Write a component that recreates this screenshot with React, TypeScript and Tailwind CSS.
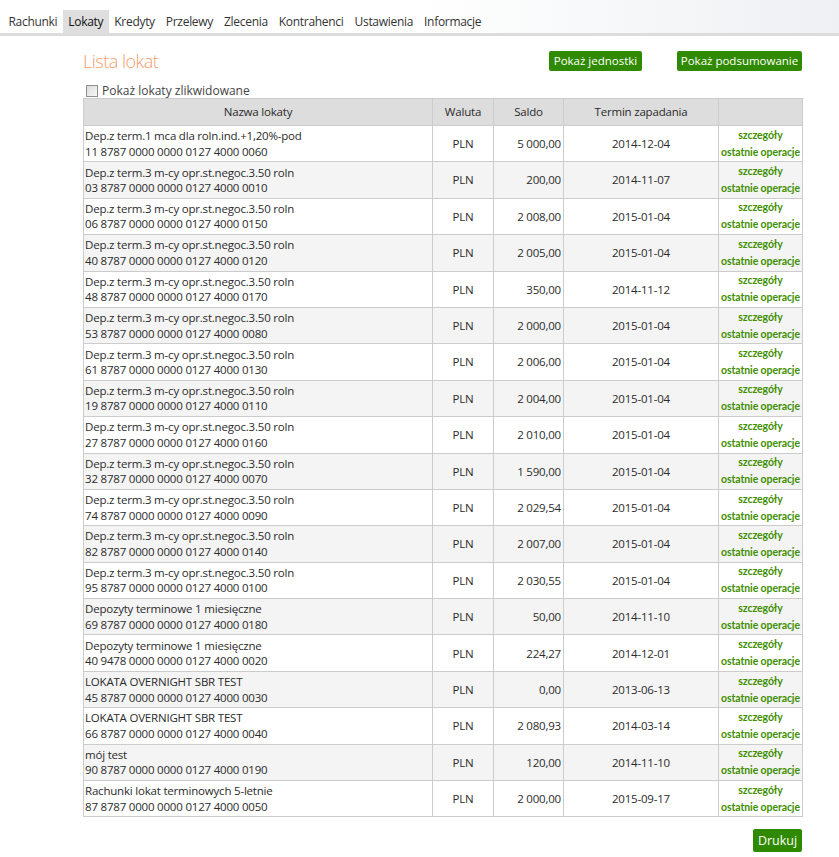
import React from "react";

const tabs = ["Rachunki", "Lokaty", "Kredyty", "Przelewy", "Zlecenia", "Kontrahenci", "Ustawienia", "Informacje"];

const NAME3 = "Dep.z term.3 m-cy opr.st.negoc.3.50 roln";

const rows = [
  { name: "Dep.z term.1 mca dla roln.ind.+1,20%-pod", acc: "11 8787 0000 0000 0127 4000 0060", saldo: "5 000,00", date: "2014-12-04" },
  { name: NAME3, acc: "03 8787 0000 0000 0127 4000 0010", saldo: "200,00", date: "2014-11-07" },
  { name: NAME3, acc: "06 8787 0000 0000 0127 4000 0150", saldo: "2 008,00", date: "2015-01-04" },
  { name: NAME3, acc: "40 8787 0000 0000 0127 4000 0120", saldo: "2 005,00", date: "2015-01-04" },
  { name: NAME3, acc: "48 8787 0000 0000 0127 4000 0170", saldo: "350,00", date: "2014-11-12" },
  { name: NAME3, acc: "53 8787 0000 0000 0127 4000 0080", saldo: "2 000,00", date: "2015-01-04" },
  { name: NAME3, acc: "61 8787 0000 0000 0127 4000 0130", saldo: "2 006,00", date: "2015-01-04" },
  { name: NAME3, acc: "19 8787 0000 0000 0127 4000 0110", saldo: "2 004,00", date: "2015-01-04" },
  { name: NAME3, acc: "27 8787 0000 0000 0127 4000 0160", saldo: "2 010,00", date: "2015-01-04" },
  { name: NAME3, acc: "32 8787 0000 0000 0127 4000 0070", saldo: "1 590,00", date: "2015-01-04" },
  { name: NAME3, acc: "74 8787 0000 0000 0127 4000 0090", saldo: "2 029,54", date: "2015-01-04" },
  { name: NAME3, acc: "82 8787 0000 0000 0127 4000 0140", saldo: "2 007,00", date: "2015-01-04" },
  { name: NAME3, acc: "95 8787 0000 0000 0127 4000 0100", saldo: "2 030,55", date: "2015-01-04" },
  { name: "Depozyty terminowe 1 miesięczne", acc: "69 8787 0000 0000 0127 4000 0180", saldo: "50,00", date: "2014-11-10" },
  { name: "Depozyty terminowe 1 miesięczne", acc: "40 9478 0000 0000 0127 4000 0020", saldo: "224,27", date: "2014-12-01" },
  { name: "LOKATA OVERNIGHT SBR TEST", acc: "45 8787 0000 0000 0127 4000 0030", saldo: "0,00", date: "2013-06-13" },
  { name: "LOKATA OVERNIGHT SBR TEST", acc: "66 8787 0000 0000 0127 4000 0040", saldo: "2 080,93", date: "2014-03-14" },
  { name: "mój test", acc: "90 8787 0000 0000 0127 4000 0190", saldo: "120,00", date: "2014-11-10" },
  { name: "Rachunki lokat terminowych 5-letnie", acc: "87 8787 0000 0000 0127 4000 0050", saldo: "2 000,00", date: "2015-09-17" },
];

export default function App() {
  return (
    <div className="min-h-[857px] bg-white font-['Open_Sans',sans-serif] text-[#2b2b2b]">
      {/* top menu */}
      <div className="h-[36px] border-b-[3px] border-[#dcdcdc] bg-gradient-to-r from-white via-white to-[#eef0f3]">
        <nav className="flex items-end h-[33px] pl-[3px]">
          {tabs.map((t) => (
            <span
              key={t}
              className={`h-[23px] px-[5.5px] text-[12px] leading-[24px] tracking-[-0.3px] ${
                t === "Lokaty" ? "bg-[#dedede] text-[#111]" : "text-[#333]"
              }`}
            >
              {t}
            </span>
          ))}
        </nav>
      </div>

      <div className="ml-[83px] w-[719px]">
        <div className="flex items-start justify-between pt-[15px]">
          <h1 className="text-[18px] font-light leading-[20px] text-[#f29d6b] tracking-[-0.5px]">Lista lokat</h1>
          <div className="flex gap-[35px]">
            <button className="h-[20px] w-[93px] rounded-[2px] bg-[#2f8a00] text-[11.5px] leading-[20px] text-white">
              Pokaż jednostki
            </button>
            <button className="h-[20px] w-[125px] rounded-[2px] bg-[#2f8a00] text-[11.5px] leading-[20px] text-white">
              Pokaż podsumowanie
            </button>
          </div>
        </div>

        <label className="mt-[12px] flex h-[15px] items-center gap-[4px] pl-[3px] text-[12px] text-[#444]">
          <span className="h-[12px] w-[12px] border border-[#8f8f8f] bg-gradient-to-br from-[#dcdcdc] to-[#f7f7f7]" />
          Pokaż lokaty zlikwidowane
        </label>

        <table className="w-[719px] table-fixed border-collapse border border-[#cccccc] text-[11.5px] tracking-[-0.2px]">
          <colgroup>
            <col className="w-[349px]" />
            <col className="w-[61px]" />
            <col className="w-[70px]" />
            <col className="w-[155px]" />
            <col className="w-[84px]" />
          </colgroup>
          <thead>
            <tr className="h-[27px] bg-[#dddddd]">
              <th className="border border-[#cccccc] font-normal">Nazwa lokaty</th>
              <th className="border border-[#cccccc] font-normal">Waluta</th>
              <th className="border border-[#cccccc] font-normal">Saldo</th>
              <th className="border border-[#cccccc] font-normal">Termin zapadania</th>
              <th className="border border-[#cccccc] font-normal"></th>
            </tr>
          </thead>
          <tbody>
            {rows.map((r, i) => (
              <tr key={r.acc} className={`h-[36.4px] ${i % 2 === 1 ? "bg-[#f4f4f4]" : "bg-white"}`}>
                <td className="border-x border-t border-[#cccccc] pl-[1px] pr-[2px] leading-[15.5px] whitespace-nowrap">
                  <div>{r.name}</div>
                  <div>{r.acc}</div>
                </td>
                <td className="border-x border-t border-[#cccccc] text-center">PLN</td>
                <td className="border-x border-t border-[#cccccc] pr-[2px] text-right">{r.saldo}</td>
                <td className="border-x border-t border-[#cccccc] text-center">{r.date}</td>
                <td className="border-x border-t border-[#cccccc] text-center font-['Lato',sans-serif] text-[10.5px] font-bold leading-[17px] tracking-[-0.1px] text-[#3f8f00]">
                  <div>szczegóły</div>
                  <div className="whitespace-nowrap">ostatnie operacje</div>
                </td>
              </tr>
            ))}
          </tbody>
        </table>

        <div className="mt-[12px] flex justify-end">
          <button className="h-[23px] w-[49px] rounded-[2px] bg-[#2f8a00] text-[12.5px] leading-[23px] text-white">
            Drukuj
          </button>
        </div>
      </div>
    </div>
  );
}
